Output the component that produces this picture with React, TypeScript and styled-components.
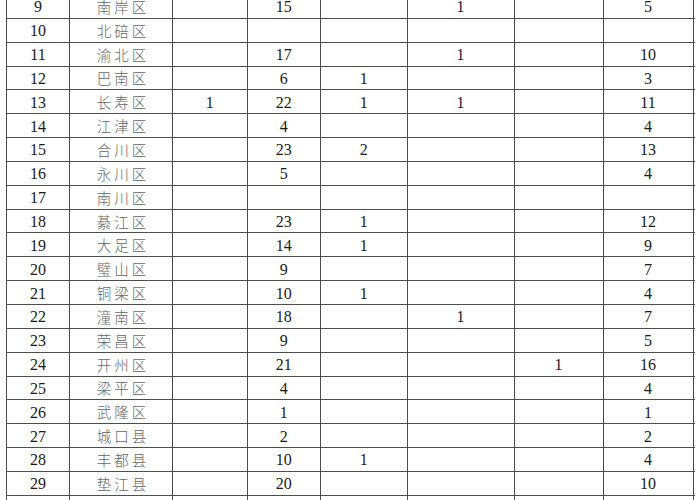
import React from "react";
import styled, { createGlobalStyle } from "styled-components";

const GlobalStyle = createGlobalStyle`
  html, body {
    margin: 0;
    padding: 0;
    background: #ffffff;
    overflow: hidden;
  }
`;

const COLUMNS = "63px 103px 74.5px 73.5px 86.5px 107px 89px 90px";

type Row = {
  no: number;
  name: string;
  values: (number | null)[];
};

const ROWS: Row[] = [
  { no: 9, name: "南岸区", values: [null, 15, null, 1, null, 5] },
  { no: 10, name: "北碚区", values: [null, null, null, null, null, null] },
  { no: 11, name: "渝北区", values: [null, 17, null, 1, null, 10] },
  { no: 12, name: "巴南区", values: [null, 6, 1, null, null, 3] },
  { no: 13, name: "长寿区", values: [1, 22, 1, 1, null, 11] },
  { no: 14, name: "江津区", values: [null, 4, null, null, null, 4] },
  { no: 15, name: "合川区", values: [null, 23, 2, null, null, 13] },
  { no: 16, name: "永川区", values: [null, 5, null, null, null, 4] },
  { no: 17, name: "南川区", values: [null, null, null, null, null, null] },
  { no: 18, name: "綦江区", values: [null, 23, 1, null, null, 12] },
  { no: 19, name: "大足区", values: [null, 14, 1, null, null, 9] },
  { no: 20, name: "璧山区", values: [null, 9, null, null, null, 7] },
  { no: 21, name: "铜梁区", values: [null, 10, 1, null, null, 4] },
  { no: 22, name: "潼南区", values: [null, 18, null, 1, null, 7] },
  { no: 23, name: "荣昌区", values: [null, 9, null, null, null, 5] },
  { no: 24, name: "开州区", values: [null, 21, null, null, 1, 16] },
  { no: 25, name: "梁平区", values: [null, 4, null, null, null, 4] },
  { no: 26, name: "武隆区", values: [null, 1, null, null, null, 1] },
  { no: 27, name: "城口县", values: [null, 2, null, null, null, 2] },
  { no: 28, name: "丰都县", values: [null, 10, 1, null, null, 4] },
  { no: 29, name: "垫江县", values: [null, 20, null, null, null, 10] },
  { no: 30, name: "忠　县", values: [null, 27, null, null, null, 12] },
];

const Sheet = styled.div`
  margin: -5px 0 0 6px;
  width: 687.5px;
  border-left: 1px solid #4d4d4d;
`;

const TableRow = styled.div`
  display: grid;
  grid-template-columns: ${COLUMNS};
  height: 23.85px;
  box-sizing: border-box;
  border-bottom: 1px solid #4d4d4d;
`;

const Cell = styled.div`
  display: flex;
  align-items: center;
  justify-content: center;
  border-right: 1px solid #4d4d4d;
  font-family: "Liberation Serif", "Times New Roman", serif;
  font-size: 16px;
  color: #1a1a1a;
  padding-top: 2px;
  box-sizing: border-box;
  white-space: nowrap;
`;

const NameCell = styled(Cell)`
  font-family: "Noto Sans CJK SC", "Noto Sans", sans-serif;
  font-weight: 300;
  font-size: 14.5px;
  letter-spacing: 3px;
  padding-left: 4px;
  padding-top: 0;
  color: #666666;
`;

export default function App() {
  return (
    <>
      <GlobalStyle />
      <Sheet>
        {ROWS.map((row) => (
          <TableRow key={row.no}>
            <Cell>{row.no}</Cell>
            <NameCell>{row.name}</NameCell>
            {row.values.map((v, i) => (
              <Cell key={i}>{v ?? ""}</Cell>
            ))}
          </TableRow>
        ))}
      </Sheet>
    </>
  );
}
